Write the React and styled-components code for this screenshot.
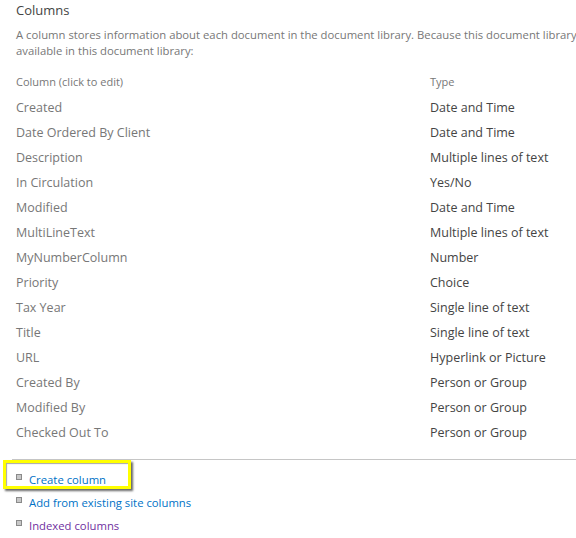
import React from "react";
import styled, { createGlobalStyle } from "styled-components";

const Global = createGlobalStyle`
  html, body {
    margin: 0;
    padding: 0;
    background: #fff;
    overflow: hidden;
  }
  body {
    font-family: "Open Sans", "Liberation Sans", sans-serif;
  }
`;

const Page = styled.div`
  width: 576px;
  height: 538px;
  overflow: hidden;
  padding: 0 0 0 16px;
  box-sizing: border-box;
`;

const Title = styled.h2`
  margin: 0;
  padding-top: 1px;
  font-size: 13px;
  font-weight: normal;
  line-height: 18px;
  color: #444;
`;

const Description = styled.div`
  margin-top: 8px;
  font-size: 11.3px;
  line-height: 16px;
  color: #777;
  div {
    white-space: nowrap;
  }
`;

const Table = styled.div`
  margin-top: 15px;
  display: grid;
  grid-template-columns: 414px 1fr;
`;

const HeadCell = styled.div`
  font-size: 11px;
  line-height: 16px;
  color: #777;
  padding-bottom: 5px;
`;

const Cell = styled.div`
  font-size: 12.5px;
  line-height: 25px;
  color: ${(p) => (p.$type ? "#444" : "#777")};
  white-space: nowrap;
`;

const Divider = styled.hr`
  margin: 14px 0 0 -4px;
  border: 0;
  border-top: 1px solid #c6c6c6;
`;

const Links = styled.ul`
  list-style: none;
  margin: 8px 0 0;
  padding: 0;
`;

const LinkItem = styled.li`
  position: relative;
  display: flex;
  align-items: center;
  gap: 7px;
  height: 23px;
  font-size: 11.3px;
  &::before {
    content: "";
    width: 4px;
    height: 4px;
    margin-top: -6px;
    border: 1px solid #8a8a8a;
    background: #c8c8c8;
  }
`;

const Highlight = styled.span`
  position: absolute;
  left: -13px;
  top: -8px;
  width: 122px;
  height: 23px;
  border: 3px solid #ffff00;
  box-shadow: 2px 2px 2px rgba(0, 0, 0, 0.6), inset 1px 1px 1px rgba(0, 0, 0, 0.35);
`;

const Link = styled.a`
  color: ${(p) => (p.$visited ? "#7030a0" : "#0072c6")};
  text-decoration: none;
`;

const rows = [
  ["Created", "Date and Time"],
  ["Date Ordered By Client", "Date and Time"],
  ["Description", "Multiple lines of text"],
  ["In Circulation", "Yes/No"],
  ["Modified", "Date and Time"],
  ["MultiLineText", "Multiple lines of text"],
  ["MyNumberColumn", "Number"],
  ["Priority", "Choice"],
  ["Tax Year", "Single line of text"],
  ["Title", "Single line of text"],
  ["URL", "Hyperlink or Picture"],
  ["Created By", "Person or Group"],
  ["Modified By", "Person or Group"],
  ["Checked Out To", "Person or Group"],
];

export default function App() {
  return (
    <>
      <Global />
      <Page>
        <Title>Columns</Title>
        <Description>
          <div>
            A column stores information about each document in the document library. Because this
            document library allows multiple content types, some column settings, such as whether
            information is required or optional for a column, are now specified by the content type
          </div>
          <div>available in this document library:</div>
        </Description>
        <Table>
          <HeadCell>Column (click to edit)</HeadCell>
          <HeadCell>Type</HeadCell>
          {rows.map(([name, type]) => (
            <React.Fragment key={name}>
              <Cell>{name}</Cell>
              <Cell $type>{type}</Cell>
            </React.Fragment>
          ))}
        </Table>
        <Divider />
        <Links>
          <LinkItem>
            <Highlight />
            <Link href="#">Create column</Link>
          </LinkItem>
          <LinkItem>
            <Link href="#">Add from existing site columns</Link>
          </LinkItem>
          <LinkItem>
            <Link href="#" $visited>Indexed columns</Link>
          </LinkItem>
        </Links>
      </Page>
    </>
  );
}
